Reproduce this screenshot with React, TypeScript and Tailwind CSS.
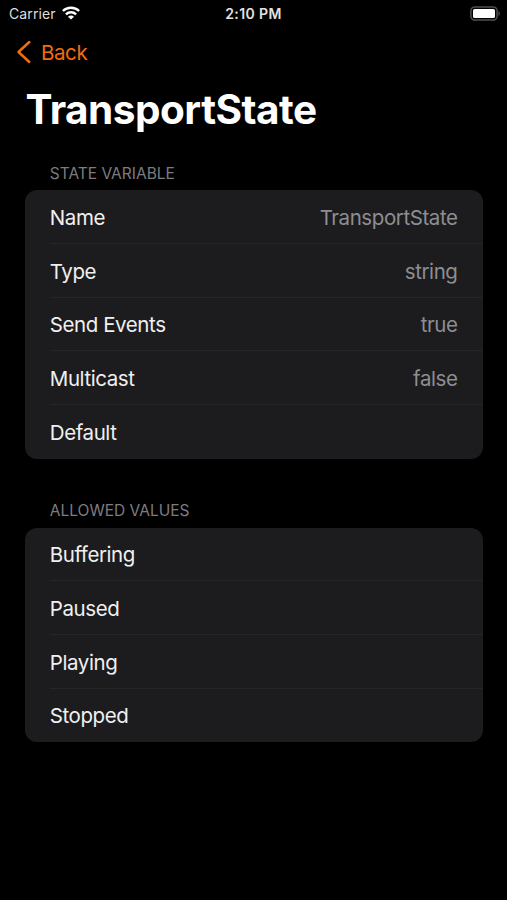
type Item = { label: string; value?: string };

const variables: Item[] = [
  { label: "Name", value: "TransportState" },
  { label: "Type", value: "string" },
  { label: "Send Events", value: "true" },
  { label: "Multicast", value: "false" },
  { label: "Default" },
];

const allowed: Item[] = [
  { label: "Buffering" },
  { label: "Paused" },
  { label: "Playing" },
  { label: "Stopped" },
];

function StatusBar() {
  return (
    <header className="grid h-[27px] grid-cols-3 items-center pr-[7px] pl-[9px] text-[14px] leading-[27px]">
      <div className="flex items-center gap-[6px] text-[#dedede]">
        <span className="tracking-[0.1px]">Carrier</span>
        <svg width="18" height="14" viewBox="0 0 18 14" fill="none" stroke="#fff" strokeWidth="2.4" className="-mt-px" aria-hidden="true">
          <path d="M.9 5C5.2.6 12.8.6 17.1 5" />
          <path d="M3.9 8.3c2.8-2.7 7.4-2.7 10.2 0" />
          <path d="M9 13.6 6 10.7c1.6-1.6 4.4-1.6 6 0Z" fill="#fff" stroke="none" />
        </svg>
      </div>
      <span className="pr-[2px] text-center font-semibold tracking-[0.4px] whitespace-nowrap text-[#e2e2e2]">2:10 PM</span>
      <svg className="-mt-px justify-self-end" width="30" height="15" viewBox="0 0 30 15" aria-hidden="true">
        <rect x="0.9" y="0.9" width="26.2" height="13.2" rx="3.8" fill="none" stroke="#505053" strokeWidth="1.5" />
        <rect x="3" y="3" width="22" height="9" rx="1.5" fill="#fff" />
        <path d="M28.5 5.2c1.9.7 1.9 3.9 0 4.6Z" fill="#505053" />
      </svg>
    </header>
  );
}

function Section({ title, items }: { title: string; items: Item[] }) {
  return (
    <section>
      <h2 className="pl-[24.4px] text-[15.5px] leading-[20px] text-[#7c7c80]">{title}</h2>
      <div className="mt-[6.5px] overflow-hidden rounded-[12px] bg-[#1c1c1e] pl-[24.4px] text-[20.5px] leading-[24px] tracking-[-0.42px]">
        {items.map((item, i) => (
          <div
            key={item.label}
            className={`flex h-[53.7px] items-center justify-between pr-[25px] ${i < items.length - 1 ? "border-b border-[#262628] pt-[2.8px]" : "pt-[1.8px]"}`}
          >
            <span className="text-[#f0f0f0]">{item.label}</span>
            {item.value && <span className="text-[#8e8e92]">{item.value}</span>}
          </div>
        ))}
      </div>
    </section>
  );
}

export default function App() {
  return (
    <div className="h-[900px] w-[507px] overflow-hidden bg-black font-['Inter','Liberation_Sans',sans-serif] text-white">
      <StatusBar />
      <nav className="flex h-[50px] items-center gap-[9px] pl-[16px] text-[#f26c0c]">
        <svg width="16" height="24" viewBox="0 0 16 24" fill="none" stroke="currentColor" strokeWidth="2.5" strokeLinecap="round" strokeLinejoin="round" aria-hidden="true">
          <path d="M13.3 2 2.5 12l10.8 10" />
        </svg>
        <span className="pt-px text-[20.5px] leading-6 tracking-[-0.4px]">Back</span>
      </nav>
      <main className="pr-[24.5px] pl-[25.4px]">
        <h1 className="mt-[9px] text-[40.5px] leading-[48px] font-bold tracking-[-0.5px]">TransportState</h1>
        <div className="mt-[29.8px] flex flex-col gap-[42.3px]">
          <Section title="STATE VARIABLE" items={variables} />
          <Section title="ALLOWED VALUES" items={allowed} />
        </div>
      </main>
    </div>
  );
}
